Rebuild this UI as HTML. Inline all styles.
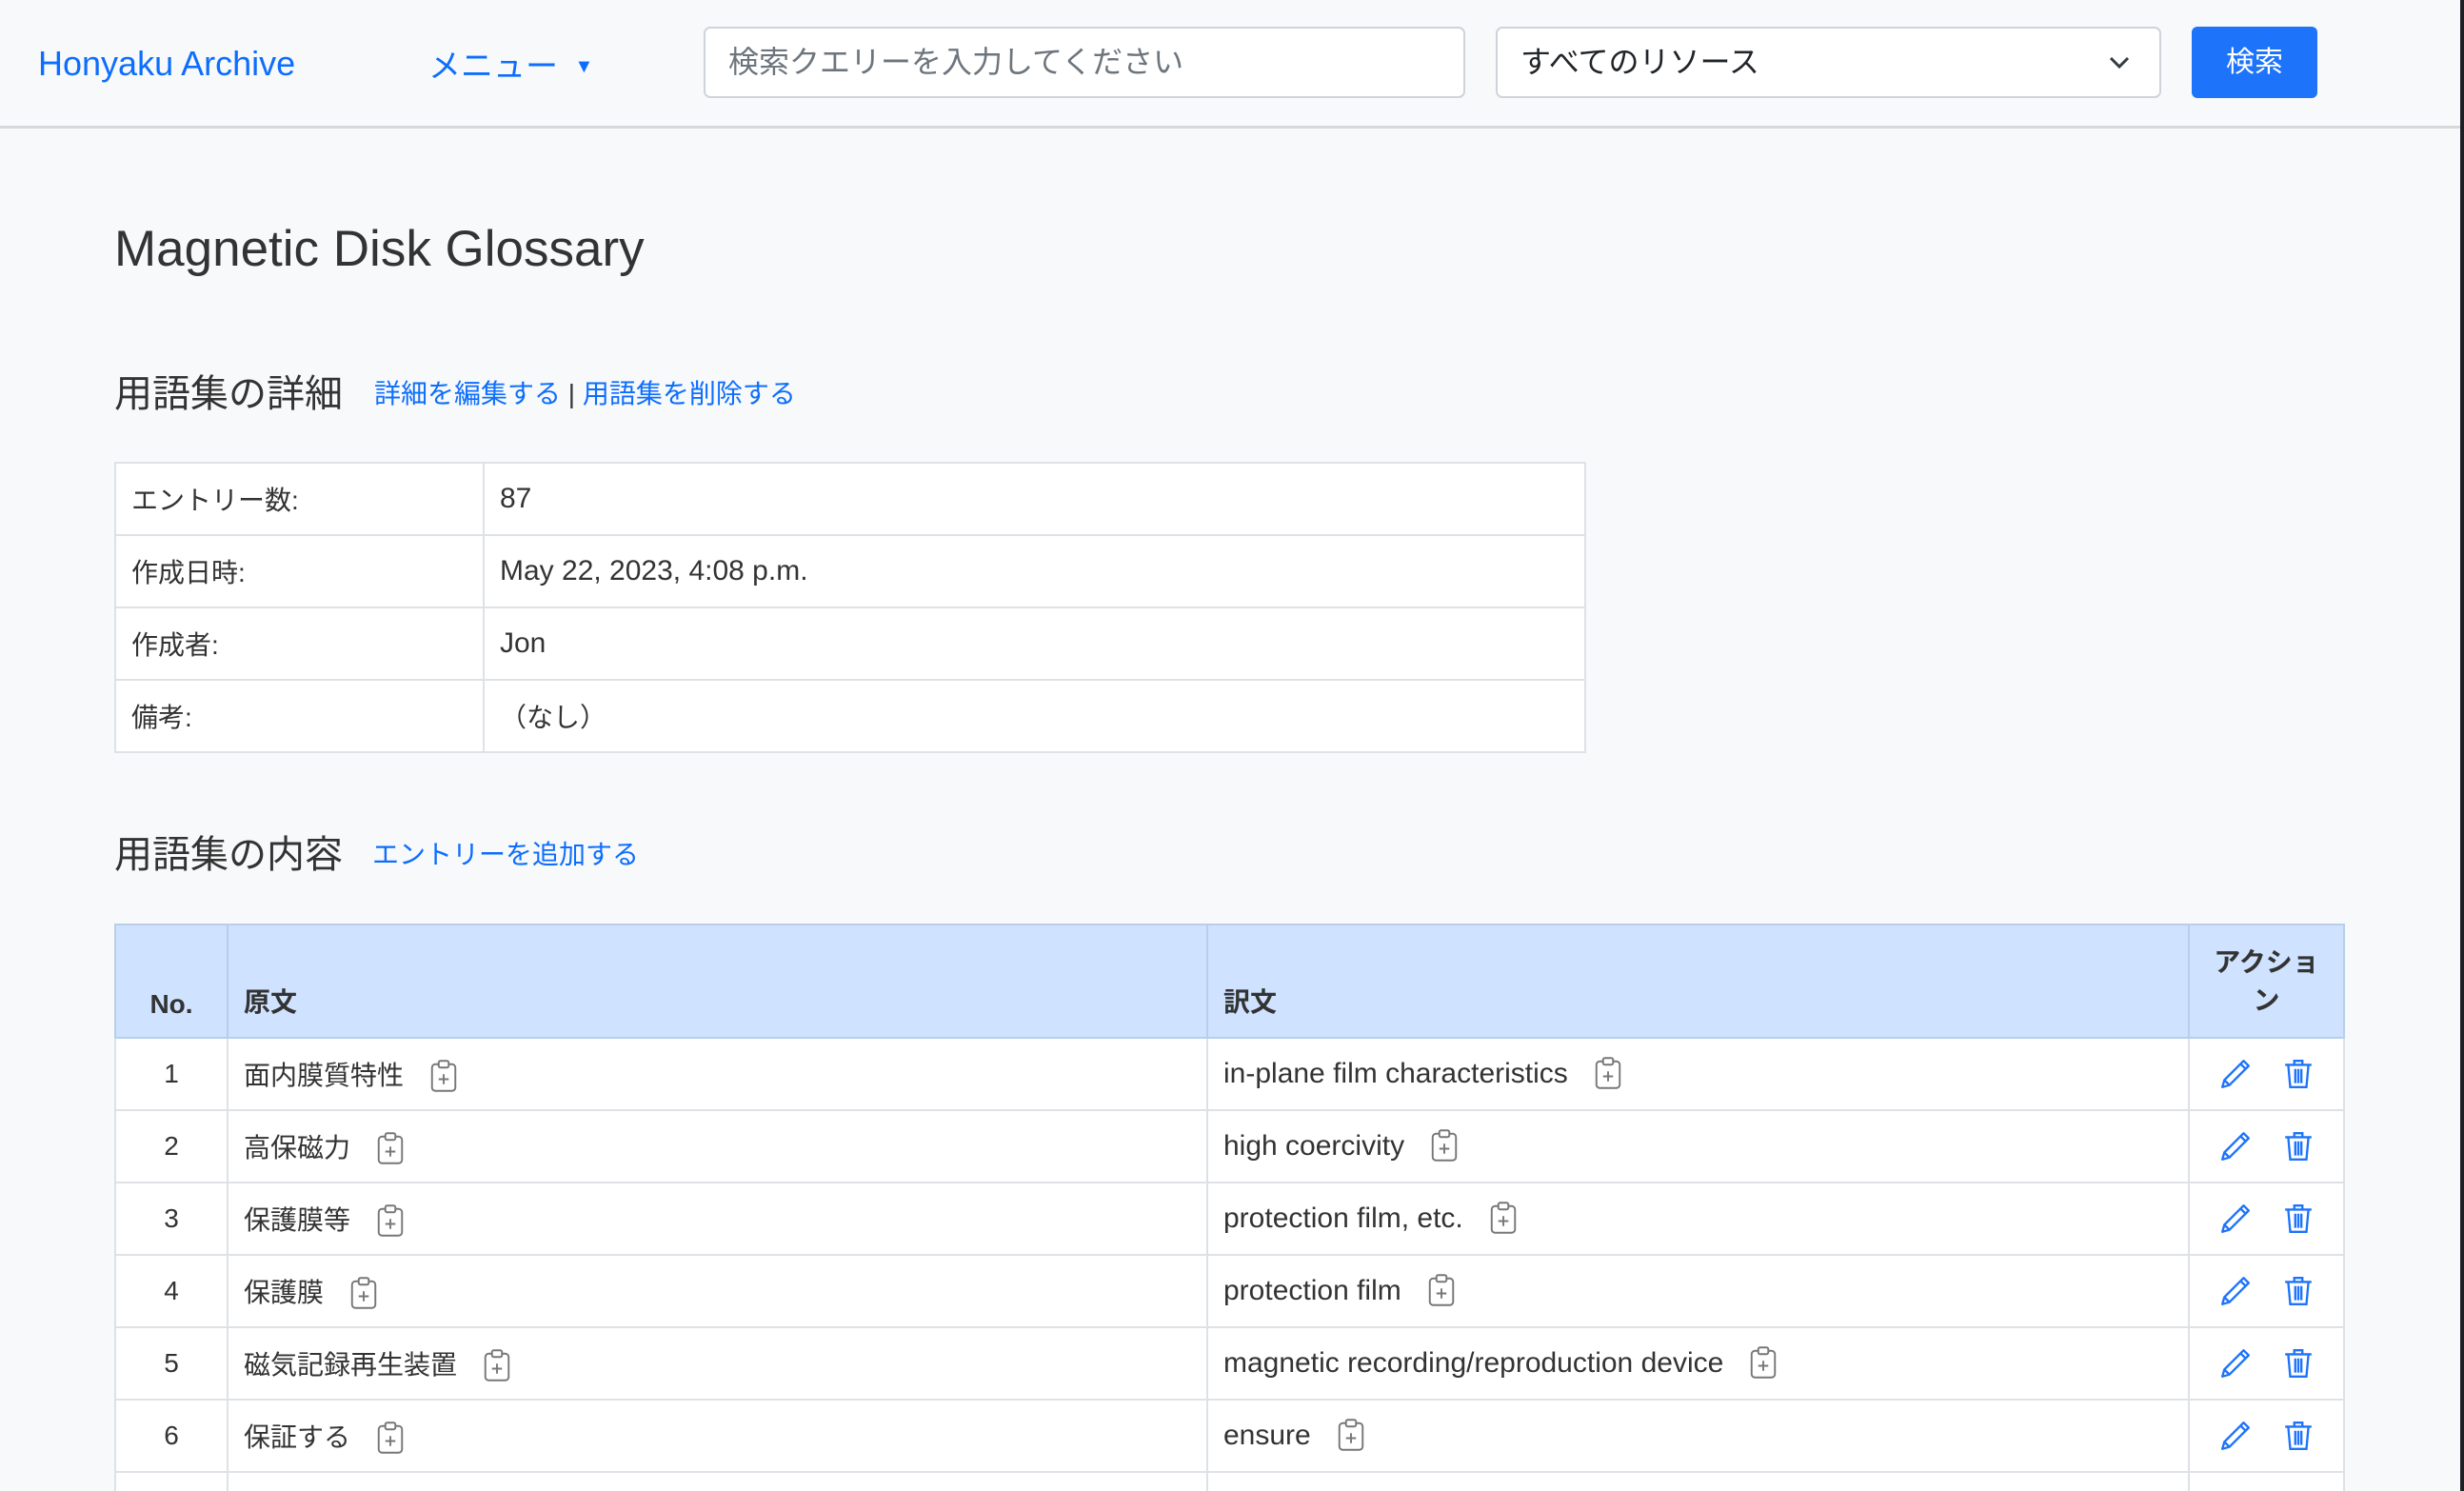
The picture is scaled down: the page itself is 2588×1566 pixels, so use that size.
<!DOCTYPE html>
<html style="height:1566px;overflow:hidden"><head><meta charset="utf-8"><style>
*{box-sizing:border-box;margin:0;padding:0}
body{width:2588px;height:1566px;overflow:hidden;background:#f8f9fa;font-family:"Liberation Sans","Noto Sans CJK JP",sans-serif;color:#212529;position:relative}
.a{position:absolute;white-space:nowrap}
.nav{position:absolute;left:0;top:0;width:2584px;height:135px;border-bottom:3px solid #d6d8db;background:#f8f9fa}
.strip{position:absolute;right:0;top:0;width:4px;height:1566px;background:#1e1f24;z-index:5}
.blue{color:#0d6efd}
.inp{position:absolute;background:#fff;border:2px solid #ced4da;border-radius:7px;font-size:32px;line-height:70px;padding-left:24px}
.wrap{position:absolute;left:0;top:0;width:2588px;height:1566px;overflow:hidden}
table{position:absolute;border-collapse:collapse;font-size:28px}
td,th{border:2px solid #dee2e6;padding:0 16px;vertical-align:middle;text-align:left}
.det td{height:76px;background:#fff;color:#333}
.main th{background:#cfe2ff;border-color:#b9cfe8;font-weight:bold;color:#333;vertical-align:bottom;padding-bottom:18px;height:119px}
.main td{height:76px;background:#fff;color:#333}
.l{font-size:30px}
.cb{display:inline-block;vertical-align:middle;margin-left:28px;margin-top:-4px}
.ic{display:inline-block;vertical-align:middle}
</style></head><body>
<div class="wrap">
<div class="nav"></div>
<div class="a blue" style="left:40px;top:46px;font-size:36px">Honyaku Archive</div>
<div class="a blue" style="left:450px;top:42px;font-size:34px">メニュー <span style="font-size:20px;position:relative;top:-5px;margin-left:8px">▼</span></div>
<div class="inp" style="left:739px;top:28px;width:800px;height:75px;color:#6c757d">検索クエリーを入力してください</div>
<div class="inp" style="left:1571px;top:28px;width:699px;height:75px;color:#212529">すべてのリソース
<svg style="position:absolute;right:30px;top:26px" width="24" height="20" viewBox="0 0 24 20"><path d="M3 5l9 9 9-9" fill="none" stroke="#343a40" stroke-width="3"/></svg></div>
<div class="a" style="left:2302px;top:28px;width:132px;height:75px;background:#1d73fa;border-radius:6px;color:#fff;font-size:30px;line-height:75px;text-align:center">検索</div>

<div class="a" style="left:120px;top:231px;font-size:53px;color:#333">Magnetic Disk Glossary</div>
<div class="a" style="left:120px;top:381px;font-size:40px;color:#333">用語集の詳細</div>
<div class="a" style="left:393px;top:392px;font-size:28px;color:#333"><span class="blue">詳細を編集する</span> | <span class="blue">用語集を削除する</span></div>

<table class="det" style="left:120px;top:485px;width:1546px">
<col style="width:387px"><col>
<tr><td>エントリー数:</td><td class="l">87</td></tr>
<tr><td>作成日時:</td><td class="l">May 22, 2023, 4:08 p.m.</td></tr>
<tr><td>作成者:</td><td class="l">Jon</td></tr>
<tr><td>備考:</td><td>（なし）</td></tr>
</table>

<div class="a" style="left:120px;top:865px;font-size:40px;color:#333">用語集の内容</div>
<div class="a blue" style="left:391px;top:876px;font-size:28px">エントリーを追加する</div>

<svg width="0" height="0" style="position:absolute"><defs>
<symbol id="cb" viewBox="0 0 16 20"><rect x="1" y="3" width="14" height="16" rx="2" fill="none" stroke="#777" stroke-width="1.1"/><rect x="5" y="1" width="6" height="4" rx="1" fill="#fff" stroke="#777" stroke-width="1.1"/><path d="M8 9v6M5 12h6" stroke="#777" stroke-width="1.1"/></symbol>
<symbol id="pen" viewBox="0 0 32 32"><path d="M24 3l5 5L10 27l-7 2 2-7z M21 6l5 5 M5 22l5 5" fill="none" stroke="#1d73fa" stroke-width="2.2" stroke-linejoin="round"/></symbol>
<symbol id="tr" viewBox="0 0 32 32"><path d="M3 7h26 M12 7V3h8v4 M6 7l2 22h16l2-22 M13 11v14 M16 11v14 M19 11v14" fill="none" stroke="#1d73fa" stroke-width="2.2"/></symbol>
</defs></svg>

<table class="main" style="left:120px;top:970px;width:2343px">
<col style="width:118px"><col style="width:1029px"><col style="width:1031px"><col>
<tr><th style="text-align:center">No.</th><th>原文</th><th>訳文</th><th style="text-align:center;line-height:40px;padding:12px 8px 18px">アクショ<br>ン</th></tr>
<tr><td style="text-align:center">1</td><td>面内膜質特性<svg class="cb" width="28" height="36"><use href="#cb"/></svg></td><td class="l">in-plane film characteristics<svg class="cb" width="28" height="36"><use href="#cb"/></svg></td><td style="text-align:center"><svg class="ic" width="34" height="34"><use href="#pen"/></svg><svg class="ic" width="34" height="34" style="margin-left:32px"><use href="#tr"/></svg></td></tr>
<tr><td style="text-align:center">2</td><td>高保磁力<svg class="cb" width="28" height="36"><use href="#cb"/></svg></td><td class="l">high coercivity<svg class="cb" width="28" height="36"><use href="#cb"/></svg></td><td style="text-align:center"><svg class="ic" width="34" height="34"><use href="#pen"/></svg><svg class="ic" width="34" height="34" style="margin-left:32px"><use href="#tr"/></svg></td></tr>
<tr><td style="text-align:center">3</td><td>保護膜等<svg class="cb" width="28" height="36"><use href="#cb"/></svg></td><td class="l">protection film, etc.<svg class="cb" width="28" height="36"><use href="#cb"/></svg></td><td style="text-align:center"><svg class="ic" width="34" height="34"><use href="#pen"/></svg><svg class="ic" width="34" height="34" style="margin-left:32px"><use href="#tr"/></svg></td></tr>
<tr><td style="text-align:center">4</td><td>保護膜<svg class="cb" width="28" height="36"><use href="#cb"/></svg></td><td class="l">protection film<svg class="cb" width="28" height="36"><use href="#cb"/></svg></td><td style="text-align:center"><svg class="ic" width="34" height="34"><use href="#pen"/></svg><svg class="ic" width="34" height="34" style="margin-left:32px"><use href="#tr"/></svg></td></tr>
<tr><td style="text-align:center">5</td><td>磁気記録再生装置<svg class="cb" width="28" height="36"><use href="#cb"/></svg></td><td class="l">magnetic recording/reproduction device<svg class="cb" width="28" height="36"><use href="#cb"/></svg></td><td style="text-align:center"><svg class="ic" width="34" height="34"><use href="#pen"/></svg><svg class="ic" width="34" height="34" style="margin-left:32px"><use href="#tr"/></svg></td></tr>
<tr><td style="text-align:center">6</td><td>保証する<svg class="cb" width="28" height="36"><use href="#cb"/></svg></td><td class="l">ensure<svg class="cb" width="28" height="36"><use href="#cb"/></svg></td><td style="text-align:center"><svg class="ic" width="34" height="34"><use href="#pen"/></svg><svg class="ic" width="34" height="34" style="margin-left:32px"><use href="#tr"/></svg></td></tr>
<tr><td></td><td></td><td></td><td></td></tr>
</table>
<div class="strip"></div>
</div>
</body></html>
